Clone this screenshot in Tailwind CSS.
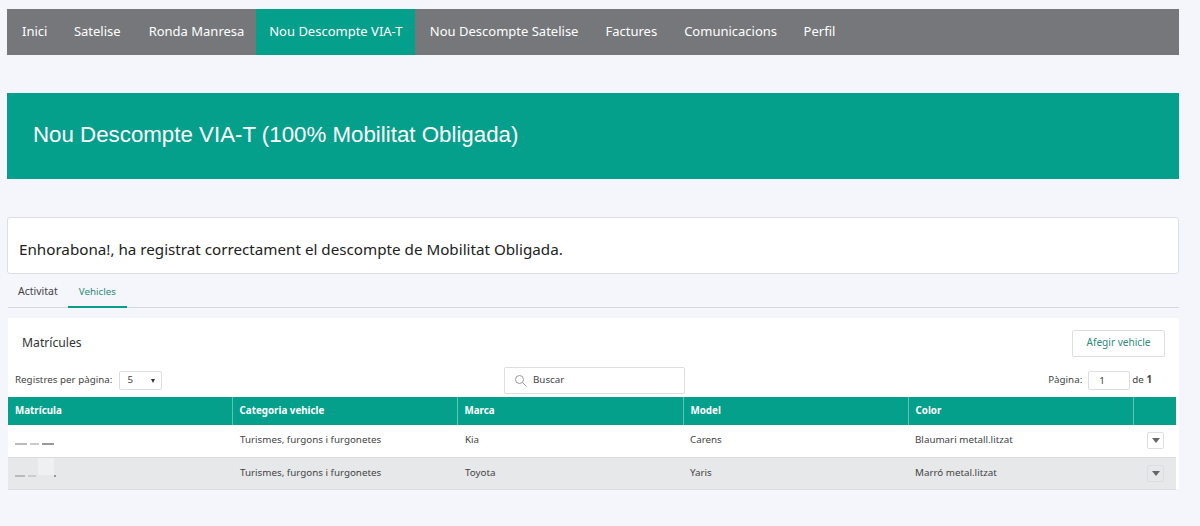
<!DOCTYPE html>
<html lang="ca">
<head>
  <meta charset="UTF-8" />
  <title>Nou Descompte VIA-T</title>
  <script src="https://cdn.jsdelivr.net/npm/@tailwindcss/browser@4"></script>
</head>
<body class="bg-[#f4f6fb] h-[526px] overflow-hidden font-['Noto_Sans',sans-serif] text-[#444]">
  <div class="pt-[9px] pl-[7px] pr-[21px]">
    <nav class="flex h-[46px] bg-[#75777a] text-[13px] text-white items-stretch pb-[1px]">
      <a class="pl-[15px] pr-[13px] flex items-center">Inici</a>
      <a class="pl-[13.5px] pr-[14.5px] flex items-center">Satelise</a>
      <a class="pl-[13.5px] pr-[12px] flex items-center">Ronda Manresa</a>
      <a class="w-[159px] justify-center bg-[#05a08b] flex items-center -mb-[1px]">Nou Descompte VIA-T</a>
      <a class="pl-[14.5px] pr-[13.5px] flex items-center">Nou Descompte Satelise</a>
      <a class="px-[13.5px] flex items-center">Factures</a>
      <a class="pl-[13.5px] pr-[13px] flex items-center">Comunicacions</a>
      <a class="px-[13.5px] flex items-center">Perfil</a>
    </nav>

    <div class="mt-[38px] h-[86px] bg-[#05a08b] flex items-center pl-[26px] pb-[3px] text-white text-[22.3px] font-['Liberation_Sans',sans-serif]">
      Nou Descompte VIA-T (100% Mobilitat Obligada)
    </div>

    <div class="mt-[38px] h-[57px] bg-white border border-[#dcdee2] rounded-[3px] pl-[11px] pt-[19px] text-[15.2px] leading-[24px] text-[#222]">
      Enhorabona!, ha registrat correctament el descompte de Mobilitat Obligada.
    </div>

    <div class="flex h-[34px] border-b border-[#d5d7da] text-[10.5px] ml-px">
      <a class="pl-[10px] pr-[10px] pt-[10px] text-[#444]">Activitat</a>
      <a class="px-[11px] pt-[10px] text-[9.8px] leading-[16px] text-[#2f8a7c] border-b-2 border-[#05a08b] h-[34px]">Vehicles</a>
    </div>

    <section class="relative mt-[10px] ml-px bg-white h-[171px]">
      <div class="flex items-center justify-between h-[49px] pl-[14px] pr-[14px]">
        <h2 class="text-[12.2px] text-[#333] pt-[1px]">Matrícules</h2>
        <button class="w-[93px] h-[27px] mt-[1px] bg-white border border-[#dcdee2] rounded-[2px] text-[10.1px] text-[#2f8a7c]">Afegir vehicle</button>
      </div>
      <div class="flex items-center h-[30px] pl-[7px] pr-[27px] text-[9.8px]">
        <div class="flex items-center gap-[7px] w-[489px] -mt-[3px]">
          <span>Registres per pàgina:</span>
          <span class="flex items-center justify-between w-[43px] h-[19px] border border-[#dcdee2] rounded-[2px] pl-[7px] pr-[6px]">5 <i class="block w-0 h-0 border-x-[2.5px] border-x-transparent border-t-[4px] border-t-[#333]"></i></span>
        </div>
        <div class="flex items-center gap-[6px] w-[181px] h-[27px] -mt-[4px] border border-[#dcdee2] rounded-[2px] pl-[9px] bg-white">
          <svg class="w-[13px] h-[13px] text-[#999]" viewBox="0 0 13 13" fill="none" stroke="currentColor" stroke-width="1"><circle cx="5.5" cy="5.5" r="4"/><path d="M8.5 8.5l4 4"/></svg>
          <span>Buscar</span>
        </div>
        <div class="flex flex-1 items-center justify-end gap-[6px] -mt-[3px]">
          <span>Pàgina:</span>
          <span class="w-[42px] h-[19px] border border-[#dcdee2] rounded-[2px] pl-[10px] leading-[17px]">1</span>
          <span class="-ml-[4px]">de <b>1</b></span>
        </div>
      </div>

      <table class="w-[1168px] table-fixed border-collapse text-[9.8px]">
        <thead>
          <tr class="h-[28px] bg-[#05a08b] text-white text-left">
            <th class="w-[224px] pl-[7px] font-bold">Matrícula</th>
            <th class="w-[225px] pl-[7px] border-l border-[#5fc4b6] font-bold">Categoria vehicle</th>
            <th class="w-[226px] pl-[7px] border-l border-[#5fc4b6] font-bold">Marca</th>
            <th class="w-[225px] pl-[7px] border-l border-[#5fc4b6] font-bold">Model</th>
            <th class="w-[225px] pl-[7px] border-l border-[#5fc4b6] font-bold">Color</th>
            <th class="border-l border-[#5fc4b6]"></th>
          </tr>
        </thead>
        <tbody>
          <tr class="h-[32px] bg-white border-b border-[#d9dbde]">
            <td class="pl-[7px]"><span class="flex items-center gap-[3px] mt-[6px]"><i class="w-[12px] h-[2px] bg-[#bbb]"></i><i class="w-[9px] h-[2px] bg-[#ccc]"></i><i class="w-[12px] h-[2px] bg-[#999]"></i></span></td>
            <td class="pl-[8px]">Turismes, furgons i furgonetes</td>
            <td class="pl-[8px]">Kia</td>
            <td class="pl-[7px]">Carens</td>
            <td class="pl-[7px]">Blaumari metall.litzat</td>
            <td class="pl-[14px]"><span class="flex items-center justify-center w-[17px] h-[17px] bg-white border border-[#dcdee2] rounded-[2px]"><i class="block w-0 h-0 border-x-[4px] border-x-transparent border-t-[5px] border-t-[#666]"></i></span></td>
          </tr>
          <tr class="h-[32px] bg-[#e7e8ea] border-b border-[#d9dbde]">
            <td class="pl-[7px]"><span class="flex items-center gap-[3px] mt-[6px]"><i class="w-[10px] h-[2px] bg-[#bbb]"></i><i class="w-[8px] h-[2px] bg-[#ccc]"></i><i class="w-[2px] h-[2px] ml-[15px] bg-[#999]"></i></span></td>
            <td class="pl-[8px]">Turismes, furgons i furgonetes</td>
            <td class="pl-[8px]">Toyota</td>
            <td class="pl-[7px]">Yaris</td>
            <td class="pl-[7px]">Marró metal.litzat</td>
            <td class="pl-[14px]"><span class="flex items-center justify-center w-[17px] h-[17px] bg-[#e7e8ea] border border-[#dcdee2] rounded-[2px]"><i class="block w-0 h-0 border-x-[4px] border-x-transparent border-t-[5px] border-t-[#666]"></i></span></td>
          </tr>
        </tbody>
      </table>
      <!-- taques de la matrícula esborrada -->
      <div class="absolute left-[30px] top-[140px] w-[16px] h-[17px] bg-[#eff0f2]"></div>
    </section>
  </div>
</body>
</html>
